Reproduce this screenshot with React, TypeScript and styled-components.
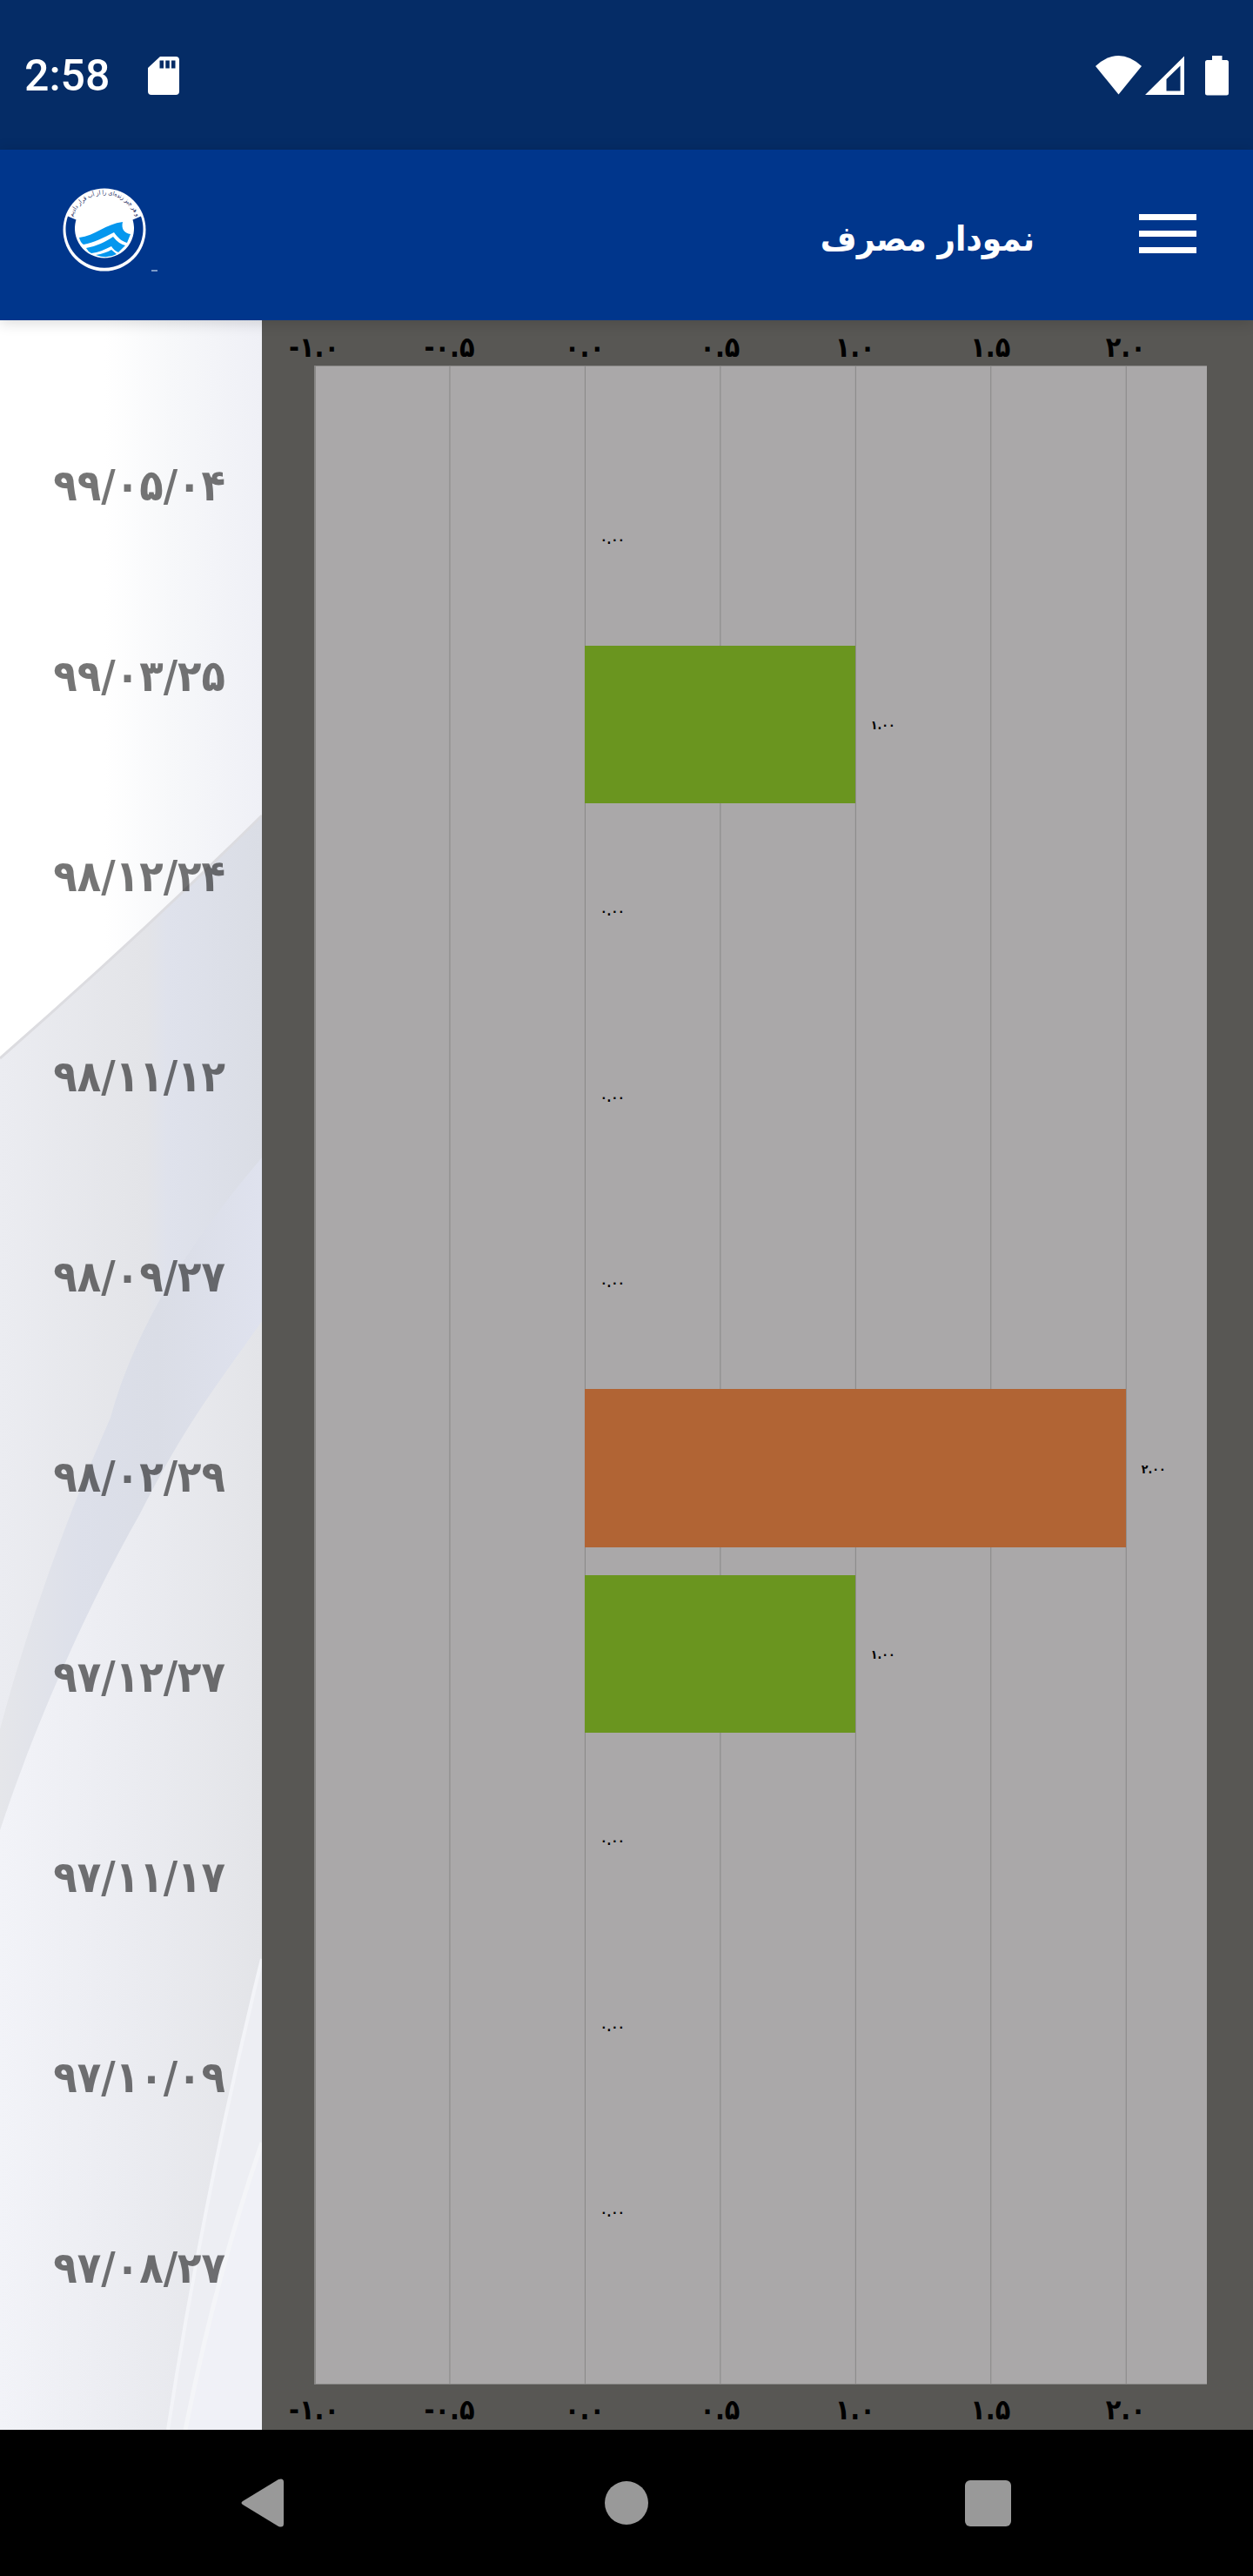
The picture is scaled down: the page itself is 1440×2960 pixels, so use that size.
import React from "react";
import styled, { createGlobalStyle } from "styled-components";

const persian = `"DejaVu Sans Condensed", "DejaVu Sans", sans-serif`;

const GlobalStyle = createGlobalStyle`
  * { box-sizing: border-box; }
  body { margin: 0; background: #000; font-family: ${persian}; }
`;

const Screen = styled.div`
  display: flex;
  flex-direction: column;
  min-height: 100vh;
`;

const StatusBar = styled.div`
  display: flex;
  align-items: center;
  height: 172px;
  padding: 2px 28px 0;
  background: #052c66;
  color: #fff;
`;

const Clock = styled.time`
  font: 500 50px/60px Roboto, sans-serif;
  margin-right: 44px;
`;

const StatusIcons = styled.div`
  display: flex;
  gap: 4px;
  margin-left: auto;
`;

const BatteryIcon = styled.svg`
  margin-left: 20px;
`;

const Header = styled.header`
  display: flex;
  align-items: center;
  position: relative;
  z-index: 1;
  height: 196px;
  padding: 0 65px 0 72px;
  background: #00368c;
  box-shadow: 0 2px 16px rgba(0, 0, 0, 0.16);
`;

const Title = styled.h1`
  margin: 0 120px 0 auto;
  padding-top: 8px;
  color: #fff;
  font-size: 40px;
  line-height: 60px;
  font-weight: 700;
`;

const IconButton = styled.button`
  display: flex;
  align-items: center;
  justify-content: center;
  padding: 0;
  border: 0;
  background: none;
  cursor: pointer;
`;

const Main = styled.main`
  display: flex;
  flex: 1;
`;

const Sidebar = styled.aside`
  position: relative;
  flex: 0 0 301px;
  background: #fff;
`;

const Backdrop = styled.svg`
  position: absolute;
  inset: 0;
  width: 100%;
  height: 100%;
`;

const Dates = styled.ol`
  position: relative;
  display: flex;
  flex-direction: column;
  height: 100%;
  margin: 0;
  padding: 86px 42px 82px 0;
  list-style: none;
`;

const DateItem = styled.li`
  display: flex;
  flex: 230;
  align-items: center;
  justify-content: flex-end;
  color: rgba(0, 0, 0, 0.54);
  font-size: 50px;
  line-height: 54px;
  font-weight: 700;
  white-space: nowrap;

  &:first-child,
  &:last-child {
    flex-grow: 208;
  }
`;

const Chart = styled.section`
  display: flex;
  flex: 1;
  flex-direction: column;
  min-width: 0;
  padding: 0 53px 0 60px;
  background: #585754;
`;

const Axis = styled.div<{ $bottom?: boolean }>`
  display: flex;
  align-items: center;
  height: 52px;
  padding-top: ${(p) => (p.$bottom ? 6 : 10)}px;
`;

const Tick = styled.span`
  flex: 0 0 calc(100% / 6.6);
  text-align: center;
  color: #000;
  font-size: 32px;
  line-height: 36px;
  font-weight: 700;

  &:first-child {
    margin-left: calc(-100% / 13.2);
  }
`;

const Plot = styled.div`
  display: flex;
  flex: 1;
  flex-direction: column;
  padding: 91px 0;
  background: linear-gradient(to right, #888786 1px, transparent 1px) 0 0 / calc(100% / 6.6) 100% #aaa8a9;
  border-top: 1px solid #888786;
  border-bottom: 1px solid #888786;
  box-shadow: inset 2px 0 #888786;
`;

const Row = styled.div`
  display: flex;
  flex: 1;
  align-items: center;
  padding-left: calc(100% / 3.3);
`;

const Bar = styled.div<{ $color: string }>`
  height: 85%;
  background: ${(p) => p.$color};
`;

const Value = styled.span`
  margin-left: 18px;
  padding-top: 2px;
  color: #000;
  font-size: 14px;
  line-height: 16px;
  font-weight: 700;
`;

const NavBar = styled.nav`
  display: grid;
  grid-template-columns: repeat(3, 415px);
  justify-content: center;
  height: 168px;
  background: #000;
`;

const ticks = ["-۱.۰", "-۰.۵", "۰.۰", "۰.۵", "۱.۰", "۱.۵", "۲.۰"];

const readings = [
  { date: "۹۹/۰۵/۰۴", value: 0 },
  { date: "۹۹/۰۳/۲۵", value: 1 },
  { date: "۹۸/۱۲/۲۴", value: 0 },
  { date: "۹۸/۱۱/۱۲", value: 0 },
  { date: "۹۸/۰۹/۲۷", value: 0 },
  { date: "۹۸/۰۲/۲۹", value: 2 },
  { date: "۹۷/۱۲/۲۷", value: 1 },
  { date: "۹۷/۱۱/۱۷", value: 0 },
  { date: "۹۷/۱۰/۰۹", value: 0 },
  { date: "۹۷/۰۸/۲۷", value: 0 },
];

const valueText = ["۰.۰۰", "۱.۰۰", "۲.۰۰"];

function Logo() {
  return (
    <svg width="112" height="112" viewBox="0 0 112 112" role="img" aria-label="آب و فاضلاب">
      <circle cx="48" cy="50" r="47.5" fill="#fff" />
      <path d="M6 34.500A44.500 44.500 0 1 0 90 34.500L80.500 38.500A34 34 0 1 1 15.500 38.500Z" fill="#00368c" />
      <path d="M19 59C37 57 50 43 69 41C67 49 71 54 78 55L74 65C68 63 64 60 59 53C47 59 36 65 24 67Q20 64 19 59Z" fill="#0597ee" />
      <path d="M27 71C39 69 49 64 58 58Q64 66 72 68L64 76Q59 74 56 69C48 73 41 76 33 77Q29 75 27 71Z" fill="#0597ee" />
      <path d="M38 79Q49 77 56 73L62 78Q51 84 38 79Z" fill="#0597ee" />
      <path id="logo-arc" d="M11 36A39 39 0 0 1 85 36" fill="none" />
      <text fill="#1c2a5e" fontSize="7" fontFamily="DejaVu Sans Condensed, DejaVu Sans" direction="rtl" textAnchor="middle">
        <textPath href="#logo-arc" startOffset="50%">و هر چیز زنده‌ای را از آب قرار دادیم</textPath>
      </text>
      <path d="M102 97h7" stroke="#7d9bc9" strokeWidth="2" />
    </svg>
  );
}

function SidebarBackdrop() {
  return (
    <Backdrop viewBox="0 0 301 2424" preserveAspectRatio="none" aria-hidden="true">
      <defs>
        <linearGradient id="sky" gradientUnits="userSpaceOnUse" x1="0" x2="301">
          <stop offset="0.4" stopColor="#fff" />
          <stop offset="0.65" stopColor="#f7f8fa" />
          <stop offset="1" stopColor="#eff0f6" />
        </linearGradient>
        <linearGradient id="slope" gradientUnits="userSpaceOnUse" x1="0" x2="301">
          <stop offset="0" stopColor="#ebecf1" />
          <stop offset="0.56" stopColor="#e3e4e8" />
          <stop offset="0.64" stopColor="#dfe2ec" />
          <stop offset="1" stopColor="#dadde5" />
        </linearGradient>
        <linearGradient id="band" gradientUnits="userSpaceOnUse" x1="0" x2="301">
          <stop offset="0" stopColor="#e5e6ea" />
          <stop offset="0.3" stopColor="#dde0ea" />
          <stop offset="0.6" stopColor="#dadde6" />
          <stop offset="1" stopColor="#dfe2ee" />
        </linearGradient>
        <linearGradient id="low" gradientUnits="userSpaceOnUse" x1="0" x2="301">
          <stop offset="0" stopColor="#f2f3f8" />
          <stop offset="0.5" stopColor="#ebecf1" />
          <stop offset="1" stopColor="#e3e4e8" />
        </linearGradient>
      </defs>
      <rect width="301" height="2424" fill="url(#sky)" />
      <path d="M0 848Q160 708 301 569V2424H0Z" fill="url(#slope)" />
      <path d="M0 848Q160 708 301 569" fill="none" stroke="#dcdce0" strokeWidth="3" />
      <path d="M301 962C210 1070 155 1160 127 1261C90 1345 40 1470 0 1619V2424H301Z" fill="url(#band)" />
      <path d="M301 1150C245 1230 215 1265 160 1373C105 1470 45 1600 0 1735V2424H301Z" fill="url(#low)" />
      <path d="M301 1883Q235 2150 193 2424H301Z" fill="#edeef3" />
      <path d="M301 1883Q235 2150 193 2424" fill="none" stroke="#f3f4f8" strokeWidth="4" />
      <path d="M301 2094Q250 2240 213 2424H301Z" fill="#f0f1f7" />
      <path d="M301 2094Q250 2240 213 2424" fill="none" stroke="#f4f5f8" strokeWidth="5" />
    </Backdrop>
  );
}

export default function App() {
  return (
    <Screen>
      <GlobalStyle />
      <StatusBar>
        <Clock>2:58</Clock>
        <svg width="36" height="46" viewBox="0 0 36 46" aria-hidden="true">
          <path fillRule="evenodd" d="M14 1H32Q36 1 36 5V41Q36 45 32 45H4Q0 45 0 41V14ZM13.500 5.500V14.500H18V5.500ZM20.300 5.500V14.500H24.800V5.500ZM27 5.500V14.500H31.500V5.500Z" fill="#fff" />
        </svg>
        <StatusIcons>
          <svg width="53" height="46" viewBox="0 0 53 46" aria-hidden="true">
            <path d="M0 12Q26.500 -12 53 12L26.500 44.500Z" fill="#fff" />
          </svg>
          <svg width="45" height="46" viewBox="0 0 45 46" aria-hidden="true">
            <path fillRule="evenodd" d="M45 0.500V45H0ZM40.500 11.500L24.500 27V40.500H40.500Z" fill="#fff" />
          </svg>
          <BatteryIcon width="27" height="46" viewBox="0 0 27 46" aria-hidden="true">
            <path d="M8 0H19.500V5H24.500Q27 5 27 7.500V43Q27 45.500 24.500 45.500H2.500Q0 45.500 0 43V7.500Q0 5 2.500 5H8Z" fill="#fff" />
          </BatteryIcon>
        </StatusIcons>
      </StatusBar>
      <Header>
        <Logo />
        <Title dir="rtl">نمودار مصرف</Title>
        <IconButton type="button" aria-label="منو">
          <svg width="66" height="48" viewBox="0 0 66 48" aria-hidden="true">
            <path d="M0 0h66v7H0zM0 19h66v7H0zM0 38h66v7H0z" fill="#fff" />
          </svg>
        </IconButton>
      </Header>
      <Main>
        <Sidebar>
          <SidebarBackdrop />
          <Dates>
            {readings.map((r) => (
              <DateItem key={r.date}>{r.date}</DateItem>
            ))}
          </Dates>
        </Sidebar>
        <Chart>
          <Axis>{ticks.map((t) => <Tick key={t}>{t}</Tick>)}</Axis>
          <Plot>
            {readings.map((r) => (
              <Row key={r.date}>
                <Bar $color={r.value > 1 ? "#b16434" : "#6a951f"} style={{ width: `${(r.value / 2.3) * 100}%` }} />
                <Value>{valueText[r.value]}</Value>
              </Row>
            ))}
          </Plot>
          <Axis $bottom>{ticks.map((t) => <Tick key={t}>{t}</Tick>)}</Axis>
        </Chart>
      </Main>
      <NavBar>
        <IconButton type="button" aria-label="Back">
          <svg width="56" height="56" viewBox="0 0 56 56" aria-hidden="true">
            <path d="M2 26L43 1Q49 -1 49 4V52Q49 57 43 55L2 30Q-1 28 2 26Z" fill="#999" />
          </svg>
        </IconButton>
        <IconButton type="button" aria-label="Home">
          <svg width="50" height="50" viewBox="0 0 50 50" aria-hidden="true">
            <circle cx="25" cy="25" r="25" fill="#999" />
          </svg>
        </IconButton>
        <IconButton type="button" aria-label="Recent apps">
          <svg width="53" height="53" viewBox="0 0 53 53" aria-hidden="true">
            <rect width="53" height="53" rx="6" fill="#999" />
          </svg>
        </IconButton>
      </NavBar>
    </Screen>
  );
}
